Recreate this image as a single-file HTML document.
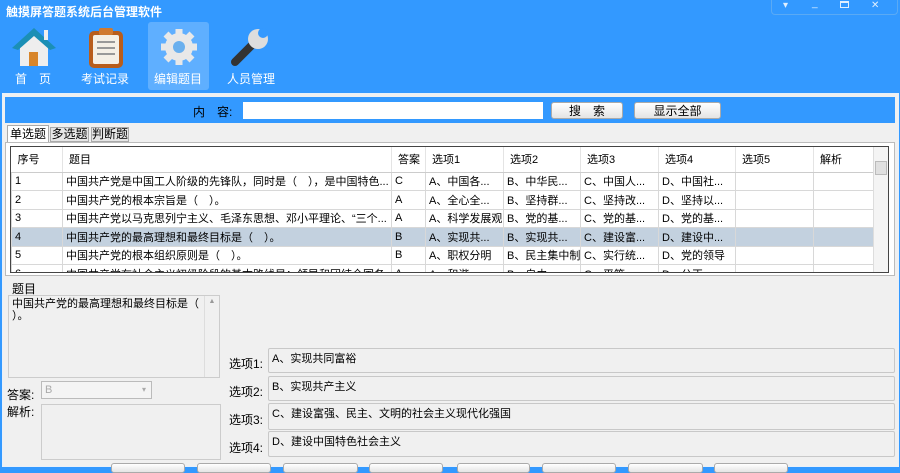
<!DOCTYPE html>
<html><head><meta charset="utf-8"><style>
*{margin:0;padding:0;box-sizing:border-box}
body{width:900px;height:467px;overflow:hidden;background:#3399ff;font-family:"Liberation Sans","Noto Sans CJK SC",sans-serif;font-size:12px;color:#000;position:relative}
.a{position:absolute}
.title{left:6px;top:3px;color:#fff;font-weight:bold;font-size:12px}
.tb{color:#fff;font-size:12px;text-align:center;width:62px}
.btn{background:linear-gradient(#fff,#e4e4e4);border:1px solid #aaa;border-radius:3px;text-align:center;line-height:16px}
table{border-collapse:collapse;font-size:11px;table-layout:fixed}
td{border:1px solid #d8d8d8;height:18.5px;padding-left:3px;white-space:nowrap;overflow:hidden}
th{font-weight:normal;text-align:left;padding-left:6px;height:25px;border-right:1px solid #e4e4e4;border-bottom:1px solid #ccc}
.box{background:#f0f0f0;border:1px solid #c8c8c8;border-radius:2px}
.lb{font-size:11px}
</style></head><body>
<div class="a title">触摸屏答题系统后台管理软件</div>
<div class="a" style="left:771px;top:0;width:127px;height:15px;border:1px solid #5aaaf5;border-top:none;border-radius:0 0 4px 4px;color:#dfefff;font-size:10px">
<span class="a" style="left:11px;top:0">▾</span><span class="a" style="left:40px;top:-2px">_</span><span class="a" style="left:68px;top:1px;width:9px;height:7px;border:1px solid #dfefff;border-top-width:2px"></span><span class="a" style="left:99px;top:0">✕</span></div>
<div class="a" style="left:148px;top:22px;width:61px;height:68px;background:rgba(255,255,255,.22);border-radius:3px"></div>
<svg class="a" style="left:12px;top:26px" width="44" height="42"><polygon points="22,4 2,22 8,22 8,40 36,40 36,22 42,22" fill="#eee"/><polygon points="22,2 0,22 6,24 22,10 38,24 44,22" fill="#1b8fb5"/><rect x="32" y="4" width="4" height="10" fill="#eee"/><rect x="17" y="26" width="9" height="14" fill="#d8852a"/></svg>
<div class="a tb" style="left:2px;top:70px">首　页</div>
<svg class="a" style="left:88px;top:27px" width="36" height="42"><rect x="1" y="4" width="34" height="37" rx="5" fill="#b85d1c"/><rect x="5" y="8" width="26" height="29" rx="2" fill="#f4efe6"/><rect x="11" y="1" width="14" height="7" rx="2" fill="#d07a30"/><g stroke="#999" stroke-width="2"><line x1="9" y1="15" x2="27" y2="15"/><line x1="9" y1="21" x2="27" y2="21"/><line x1="9" y1="27" x2="27" y2="27"/></g></svg>
<div class="a tb" style="left:74px;top:70px">考试记录</div>
<svg class="a" style="left:159px;top:27px" width="40" height="40"><g fill="#e8e8e8"><circle cx="20" cy="20" r="14"/><g stroke="#e8e8e8" stroke-width="7"><line x1="20" y1="2" x2="20" y2="38"/><line x1="2" y1="20" x2="38" y2="20"/><line x1="7" y1="7" x2="33" y2="33"/><line x1="33" y1="7" x2="7" y2="33"/></g></g><circle cx="20" cy="20" r="6" fill="#6ab0ee"/></svg>
<div class="a tb" style="left:147px;top:70px">编辑题目</div>
<svg class="a" style="left:230px;top:27px" width="42" height="40"><line x1="5" y1="35" x2="22" y2="18" stroke="#333" stroke-width="8" stroke-linecap="round"/><circle cx="28" cy="12" r="10" fill="#ddd"/><circle cx="33" cy="6" r="5" fill="#3399ff"/></svg>
<div class="a tb" style="left:220px;top:70px">人员管理</div>
<div class="a" style="left:2px;top:93px;width:897px;height:374px;background:#f0f0f0;border:1px solid #e8f0fa"></div>
<div class="a" style="left:5px;top:97px;width:890px;height:26px;background:#3399ff"></div>
<div class="a" style="left:193px;top:103px">内　容:</div>
<div class="a" style="left:243px;top:102px;width:300px;height:17px;background:#fff"></div>
<div class="a btn" style="left:551px;top:102px;width:72px;height:17px">搜　索</div>
<div class="a btn" style="left:634px;top:102px;width:87px;height:17px">显示全部</div>
<div class="a" style="left:7px;top:125px;width:42px;height:18px;background:#fff;border:1px solid #aaa;border-bottom:none;text-align:center;line-height:16px">单选题</div>
<div class="a" style="left:50px;top:127px;width:39px;height:15px;background:#e6e6e6;border:1px solid #aaa;text-align:center;line-height:13px">多选题</div>
<div class="a" style="left:91px;top:127px;width:38px;height:15px;background:#e6e6e6;border:1px solid #aaa;text-align:center;line-height:13px">判断题</div>
<div class="a" style="left:5px;top:142px;width:890px;height:134px;background:#fff;border:1px solid #bbb"></div>
<div class="a" style="left:10px;top:146px;width:879px;height:127px;border:1px solid #444;background:#fff;overflow:hidden">
<table style="width:863px">
<colgroup><col style="width:51px"><col style="width:329px"><col style="width:34px"><col style="width:78px"><col style="width:77px"><col style="width:78px"><col style="width:77px"><col style="width:78px"><col style="width:61px"></colgroup>
<tr><th>序号</th><th>题目</th><th>答案</th><th>选项1</th><th>选项2</th><th>选项3</th><th>选项4</th><th>选项5</th><th>解析</th></tr>
<tr><td>1</td><td>中国共产党是中国工人阶级的先锋队，同时是（　），是中国特色...</td><td>C</td><td>A、中国各...</td><td>B、中华民...</td><td>C、中国人...</td><td>D、中国社...</td><td></td><td></td></tr>
<tr><td>2</td><td>中国共产党的根本宗旨是（　）。</td><td>A</td><td>A、全心全...</td><td>B、坚持群...</td><td>C、坚持改...</td><td>D、坚持以...</td><td></td><td></td></tr>
<tr><td>3</td><td>中国共产党以马克思列宁主义、毛泽东思想、邓小平理论、“三个...</td><td>A</td><td>A、科学发展观</td><td>B、党的基...</td><td>C、党的基...</td><td>D、党的基...</td><td></td><td></td></tr>
<tr style="background:#c3d1df"><td>4</td><td>中国共产党的最高理想和最终目标是（　）。</td><td>B</td><td>A、实现共...</td><td>B、实现共...</td><td>C、建设富...</td><td>D、建设中...</td><td></td><td></td></tr>
<tr><td>5</td><td>中国共产党的根本组织原则是（　）。</td><td>B</td><td>A、职权分明</td><td>B、民主集中制</td><td>C、实行统...</td><td>D、党的领导</td><td></td><td></td></tr>
<tr><td>6</td><td>中国共产党在社会主义初级阶段的基本路线是：领导和团结全国各...</td><td>A</td><td>A、和谐</td><td>B、自由</td><td>C、平等</td><td>D、公正</td><td></td><td></td></tr>
</table>
<div class="a" style="right:0;top:0;width:15px;height:125px;background:#f4f4f4;border-left:1px solid #ddd"><div class="a" style="left:1px;top:14px;width:12px;height:14px;background:#e0e0e0;border:1px solid #bbb"></div></div>
</div>
<div class="a" style="left:12px;top:280px">题目</div>
<div class="a" style="left:8px;top:295px;width:212px;height:83px;border:1px solid #ccc;background:#f0f0f0;font-size:11px;padding:2px 3px;line-height:12px">中国共产党的最高理想和最终目标是（<br>）。<div class="a" style="right:0;top:0;width:15px;height:81px;border-left:1px solid #ddd;color:#999;font-size:7px;text-align:center">▲<br><br><br><br><br><br><br><br><br>▼</div></div>
<div class="a" style="left:7px;top:386px">答案:</div>
<div class="a" style="left:41px;top:381px;width:111px;height:18px;border:1px solid #bbb;background:#f4f4f4;color:#aaa;font-size:11px;padding-left:3px;line-height:16px">B<span class="a" style="right:5px;top:0;font-size:8px">▾</span></div>
<div class="a" style="left:7px;top:403px">解析:</div>
<div class="a" style="left:41px;top:404px;width:180px;height:56px;border:1px solid #ccc;background:#f0f0f0"></div>
<div class="a" style="left:229px;top:355px">选项1:</div>
<div class="a" style="left:229px;top:383px">选项2:</div>
<div class="a" style="left:229px;top:411px">选项3:</div>
<div class="a" style="left:229px;top:439px">选项4:</div>
<div class="a box" style="left:268px;top:348px;width:627px;height:25px;padding:1px 3px;font-size:11px">A、实现共同富裕</div>
<div class="a box" style="left:268px;top:376px;width:627px;height:25px;padding:1px 3px;font-size:11px">B、实现共产主义</div>
<div class="a box" style="left:268px;top:403px;width:627px;height:27px;padding:1px 3px;font-size:11px">C、建设富强、民主、文明的社会主义现代化强国</div>
<div class="a box" style="left:268px;top:431px;width:627px;height:26px;padding:1px 3px;font-size:11px">D、建设中国特色社会主义</div>
<div class="a btn" style="left:111px;top:463px;width:74px;height:10px"></div>
<div class="a btn" style="left:197px;top:463px;width:74px;height:10px"></div>
<div class="a btn" style="left:283px;top:463px;width:75px;height:10px"></div>
<div class="a btn" style="left:369px;top:463px;width:74px;height:10px"></div>
<div class="a btn" style="left:457px;top:463px;width:73px;height:10px"></div>
<div class="a btn" style="left:542px;top:463px;width:74px;height:10px"></div>
<div class="a btn" style="left:628px;top:463px;width:75px;height:10px"></div>
<div class="a btn" style="left:714px;top:463px;width:74px;height:10px"></div>
</body></html>
